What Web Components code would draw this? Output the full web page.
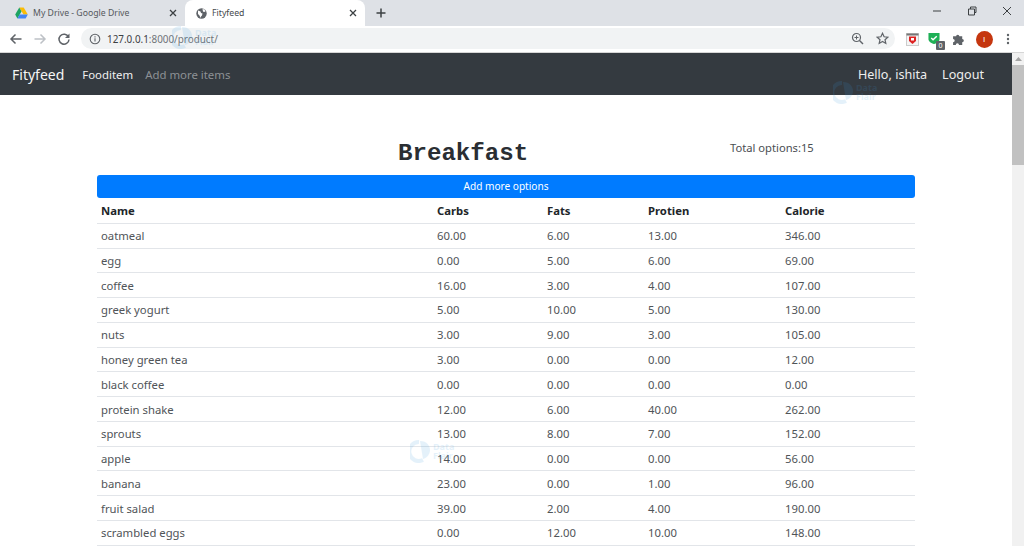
<!DOCTYPE html>
<html><head><meta charset="utf-8"><title>Fityfeed</title>
<style>html,body{margin:0;height:546px;overflow:hidden;background:#fff}body{font-family:"Noto Sans","Open Sans",sans-serif;position:relative}</style>
</head><body>
<browser-chrome></browser-chrome>
<page-view></page-view>
<water-mark style="left:172px;top:25px"></water-mark>
<script>
const FONT='"Noto Sans","Open Sans",sans-serif';
class BrowserChrome extends HTMLElement{connectedCallback(){this.attachShadow({mode:'open'}).innerHTML=`<style>
:host{display:block;height:53px;font:8.700px ${FONT};color:#3c4043;position:relative}
.tabs{height:26px;background:#dee1e6;display:flex;box-sizing:border-box}
.tab{width:185px;display:flex;align-items:center;box-sizing:border-box;padding:0 8px 0 15px;gap:5px;color:#55585c}
.tab.on{width:180px;background:#fff;border-radius:8px 8px 0 0;padding-left:11px;color:#45484c}
.tab span{flex:1}
.tab svg{flex:none}
.plus{width:32px;display:flex;align-items:center;justify-content:center}
.grow{flex:1}
.win{display:flex;align-items:center;padding-right:0}
.win div{width:35px;display:flex;justify-content:center;margin-top:-4px}
.bar{display:flex;align-items:center;background:#fff;box-sizing:border-box;padding:0 4px 0 9px;border-bottom:1px solid #d6d6d6;height:27px}
.nav{display:flex;gap:10px;width:72px;flex:none}
.url{flex:1;height:21px;border-radius:11px;background:#f1f3f4;display:flex;align-items:center;padding:0 6.500px 0 8px;font-size:9.900px;gap:6px;color:#3c4043;margin-bottom:1px}
.url b{font-weight:400;color:#70757a}
.url i{flex:1}
.ext{display:flex;align-items:center;margin-left:5px;flex:none}
.e{width:24px;display:flex;justify-content:center;position:relative;flex:none}
.e:nth-child(1){margin-right:-2px}
.e:nth-child(2){margin-right:1px}
.e:nth-child(4){margin-left:1px}
.badge{position:absolute;right:1px;top:7px;background:#5f6368;color:#fff;font-size:7px;line-height:9px;width:9px;text-align:center;border-radius:1px}
.av{width:17px;height:17px;border-radius:50%;background:#c5360f;color:#fff;font:8px/17px "Liberation Sans",sans-serif;text-align:center}
</style>
<div class="tabs">
<div class="tab"><svg width="13" height="12" viewBox="0 0 13 12"><path d="M4.300 .5h4.400l4.100 7H8.500z" fill="#fbbc04"/><path d="M4.300 .5L.2 7.600l2.200 3.800 4.100-7z" fill="#1da462"/><path d="M2.400 11.400h8.200l2.200-3.900H4.600z" fill="#4285f4"/></svg><span>My Drive - Google Drive</span><svg width="8" height="8" viewBox="0 0 8 8"><path d="M1 1l6 6M7 1L1 7" stroke="#3c4043" stroke-width="1.300"/></svg></div>
<div class="tab on"><svg width="11" height="11" viewBox="0 0 11 11"><circle cx="5.500" cy="5.500" r="5.200" fill="#5f6368"/><path d="M2 2.500l2.500 1 .5 1.500 1.500.5-.5 2-1 1-.5 1.500-1-2.500-1.500-1.500zM6.500 1l2 .5 1 2-1.500.5-1-.5z" fill="#fff"/></svg><span>Fityfeed</span><svg width="8" height="8" viewBox="0 0 8 8"><path d="M1 1l6 6M7 1L1 7" stroke="#3c4043" stroke-width="1.300"/></svg></div>
<div class="plus"><svg width="10" height="10" viewBox="0 0 10 10"><path d="M5 .5v9M.5 5h9" stroke="#3c4043" stroke-width="1.500"/></svg></div>
<div class="grow"></div>
<div class="win"><div><svg width="10" height="10" viewBox="0 0 10 10"><path d="M1 5h8" stroke="#3c4043"/></svg></div><div><svg width="10" height="10" viewBox="0 0 10 10"><path d="M1.500 3h6v6h-6zM3.500 3V1h5.500v5.500H7.500" fill="none" stroke="#3c4043"/></svg></div><div><svg width="10" height="10" viewBox="0 0 10 10"><path d="M1 1l8 8M9 1l-8 8" stroke="#3c4043"/></svg></div></div>
</div>
<div class="bar">
<div class="nav">
<svg width="14" height="14" viewBox="0 0 14 14"><path d="M12.500 7H2M6.500 2.500L2 7l4.500 4.500" fill="none" stroke="#5f6368" stroke-width="1.500"/></svg>
<svg width="14" height="14" viewBox="0 0 14 14"><path d="M1.500 7H12M7.500 2.500L12 7l-4.500 4.500" fill="none" stroke="#bdc1c6" stroke-width="1.500"/></svg>
<svg width="14" height="14" viewBox="0 0 14 14"><path d="M11.500 5A5 5 0 1 0 12 7.500" fill="none" stroke="#5f6368" stroke-width="1.500"/><path d="M12.500 1.500V6H8z" fill="#5f6368"/></svg>
</div>
<div class="url">
<svg width="12" height="12" viewBox="0 0 12 12"><circle cx="6" cy="6" r="4.800" fill="none" stroke="#5f6368" stroke-width="1.100"/><path d="M6 5.300v3.200M6 3.300v1.100" stroke="#5f6368" stroke-width="1.100"/></svg>
<span>127.0.0.1<b>:8000/product/</b></span><i></i>
<svg width="13" height="13" viewBox="0 0 13 13"><circle cx="5.500" cy="5.500" r="4" fill="none" stroke="#5f6368" stroke-width="1.200"/><path d="M8.500 8.500l3.500 3.500" stroke="#5f6368" stroke-width="1.400"/><path d="M3.500 5.500h4M5.500 3.500v4" stroke="#5f6368"/></svg>
<svg width="13" height="13" viewBox="0 0 13 13" style="margin-left:6px"><path d="M6.500 1.300l1.600 3.500 3.700.4-2.800 2.500.8 3.700-3.300-1.900-3.300 1.900.8-3.700L1.200 5.200l3.700-.4z" fill="none" stroke="#5f6368" stroke-width="1.200"/></svg>
</div>
<div class="ext">
<div class="e"><svg width="13" height="13" viewBox="0 0 13 13"><rect x=".5" y=".5" width="12" height="12" fill="#f4f4f4" stroke="#ccc"/><rect x=".5" y=".5" width="12" height="2" fill="#777"/><path d="M3 3.500h7V8l-3.500 3L3 8z" fill="#d22"/><path d="M5 5h3v2.500H5z" fill="#fff"/></svg></div>
<div class="e"><svg width="12" height="12" viewBox="0 0 13 13" style="margin-top:-2px"><path d="M.5 1h12v6.500c0 3-3 4.500-6 5.500-3-1-6-2.500-6-5.500z" fill="#1eb056"/><path d="M3.500 6.500l2 2 4-4" fill="none" stroke="#fff" stroke-width="1.500"/></svg><span class="badge">0</span></div>
<div class="e"><svg width="14" height="14" viewBox="0 0 13 13"><path d="M1 4h2.800a1.500 1.500 0 0 1 3 0H9.500v2.500a1.500 1.500 0 0 1 0 3V12H6.500a1.500 1.500 0 0 0-3 0H1V9.500a1.500 1.500 0 0 0 0-3z" fill="#5f6368"/></svg></div>
<div class="e"><div class="av">I</div></div>
<div class="e"><svg width="4" height="12" viewBox="0 0 4 12"><circle cx="2" cy="2" r="1.200" fill="#5f6368"/><circle cx="2" cy="6" r="1.200" fill="#5f6368"/><circle cx="2" cy="10" r="1.200" fill="#5f6368"/></svg></div>
</div></div>`}}
customElements.define('browser-chrome',BrowserChrome);

class NavBar extends HTMLElement{connectedCallback(){this.attachShadow({mode:'open'}).innerHTML=`<style>
:host{display:flex;align-items:center;height:42px;background:#343a40;padding:0 28px 0 12px;color:#fff;font-family:${FONT}}
.brand{font-size:14px;margin-right:18px;color:#f6f6f6}
a{font-size:11.400px;margin-right:12px;color:#f0f0f0}
a.dim{color:#8d9195}
.s{flex:1}
.r{font-size:12.600px;color:#eee;margin-left:15px}
</style><span class="brand">Fityfeed</span><a>Fooditem</a><a class="dim">Add more items</a><span class="s"></span><span class="r">Hello, ishita</span><span class="r">Logout</span>`}}
customElements.define('nav-bar',NavBar);

class FoodTable extends HTMLElement{connectedCallback(){
const rows=[["oatmeal","60.00","6.00","13.00","346.00"],["egg","0.00","5.00","6.00","69.00"],["coffee","16.00","3.00","4.00","107.00"],["greek yogurt","5.00","10.00","5.00","130.00"],["nuts","3.00","9.00","3.00","105.00"],["honey green tea","3.00","0.00","0.00","12.00"],["black coffee","0.00","0.00","0.00","0.00"],["protein shake","12.00","6.00","40.00","262.00"],["sprouts","13.00","8.00","7.00","152.00"],["apple","14.00","0.00","0.00","56.00"],["banana","23.00","0.00","1.00","96.00"],["fruit salad","39.00","2.00","4.00","190.00"],["scrambled eggs","0.00","12.00","10.00","148.00"]];
const head=["Name","Carbs","Fats","Protien","Calorie"];
const row=(c,cl)=>`<div class="row ${cl}">${c.map(t=>`<span>${t}</span>`).join('')}</div>`;
this.attachShadow({mode:'open'}).innerHTML=`<style>
:host{display:block;font:11.300px ${FONT};color:#505458}
.row{display:grid;grid-template-columns:336px 110px 101px 137px 1fr;padding-left:4px;height:24.770px;box-sizing:border-box;align-items:center;border-bottom:1px solid #e2e5e9}
.head{font-weight:700;color:#212529;height:24.800px}
</style>${row(head,'head')}${rows.map(r=>row(r,'')).join('')}`}}
customElements.define('food-table',FoodTable);

class WaterMark extends HTMLElement{connectedCallback(){this.attachShadow({mode:'open'}).innerHTML=`<style>
:host{position:absolute;display:flex;align-items:center;gap:1px;opacity:.13;color:#3b9be0;font:700 9px/9px ${FONT};pointer-events:none}
</style><svg width="22" height="24" viewBox="0 0 22 24"><path d="M9 3a9.500 9.500 0 1 0 4 18" fill="none" stroke="#3b9be0" stroke-width="4"/><path d="M10 2c7 0 10 5 10 9s-3 8-7 9z" fill="#3b9be0"/></svg><span>Data<br>Flair</span>`}}
customElements.define('water-mark',WaterMark);

class PageView extends HTMLElement{connectedCallback(){this.attachShadow({mode:'open'}).innerHTML=`<style>
:host{display:flex;height:493px;overflow:hidden;position:relative;font-family:${FONT}}
.main{flex:1;min-width:0}
.sb{width:12px;background:#f1f1f1;flex:none;display:flex;flex-direction:column;align-items:stretch}
.arrow{height:12px;display:flex;align-items:center;justify-content:center}
.thumb{height:100px;background:#c1c1c1}
.wrap{margin:0 97px;width:818px}
.top{display:flex;height:82px;box-sizing:border-box;padding-top:43px;position:relative}
h1{margin:2px 0 0 301px;font:700 24.100px/28px "Liberation Mono",monospace;color:#2a2e33;width:332px}
.tot{font-size:11.200px;color:#4a4e52;line-height:20px}
.btn{background:#007bff;color:#fff;height:23px;line-height:23px;font-size:10.100px;text-align:center;border-radius:3px;margin-top:-2px;margin-bottom:1px}
</style>
<div class="main"><nav-bar></nav-bar>
<div class="wrap"><div class="top"><h1>Breakfast</h1><span class="tot">Total options:15</span></div>
<div class="btn">Add more options</div><food-table></food-table></div></div>
<div class="sb"><div class="arrow"><svg width="7" height="4" viewBox="0 0 7 4"><path d="M0 4l3.500-4 3.500 4z" fill="#a3a3a3"/></svg></div><div class="thumb"></div></div>
<water-mark style="left:410px;top:386px"></water-mark>
<water-mark style="left:833px;top:27px"></water-mark>`}}
customElements.define('page-view',PageView);
</script>
</body></html>
